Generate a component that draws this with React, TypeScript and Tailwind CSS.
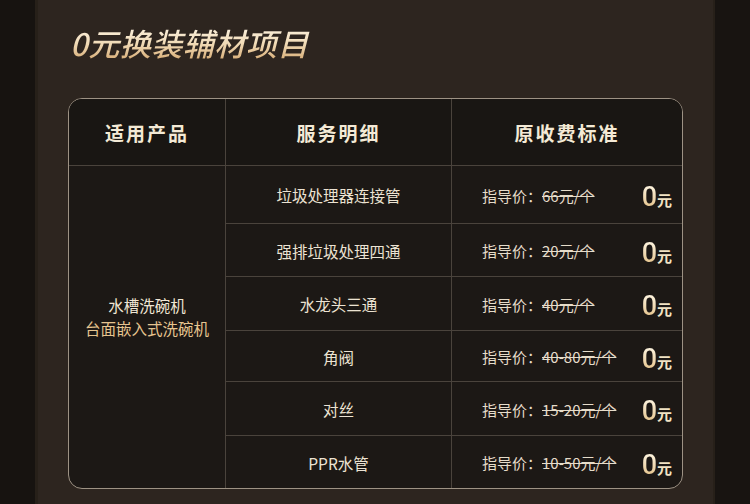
const rows = [
  { name: '垃圾处理器连接管', price: '66元/个', h: 'h-[58px]' },
  { name: '强排垃圾处理四通', price: '20元/个', h: 'h-[53px]' },
  { name: '水龙头三通', price: '40元/个', h: 'h-[54px]' },
  { name: '角阀', price: '40-80元/个', h: 'h-[51px]' },
  { name: '对丝', price: '15-20元/个', h: 'h-[54px]' },
  { name: 'PPR水管', price: '10-50元/个', h: 'h-[52px]' },
];

const cjk = "font-['Noto_Sans_CJK_SC',sans-serif]";

export default function App() {
  return (
    <div className={`flex h-[504px] w-[750px] overflow-hidden bg-[#1a1613] ${cjk}`}>
      <div className="w-[35px] shrink-0 bg-[#171310]" />
      <div className="w-[680px] shrink-0 border-l-[3px] border-r-[2px] border-[#272019] bg-[#2d251f] pl-[30px]">
        {/* Title */}
        <h1 className="mt-[23px] bg-gradient-to-b from-[#fdf6e8] via-[#f1dcb8] to-[#d3a66c] bg-clip-text pl-[2px] text-[31px] font-medium italic leading-[40px] tracking-[0.5px] text-transparent">
          0元换装辅材项目
        </h1>

        {/* Table */}
        <div className="mt-[35px] w-[615px] overflow-hidden rounded-[14px] border border-[#9d9284] bg-[#1c1815]">
          <div className="flex h-[67px] border-b border-[#4a433c] bg-[#191613] text-[19px] font-bold tracking-[2px] text-[#f4ead6]">
            <div className="flex w-[157px] items-center justify-center border-r border-[#4a433c] pt-[3px]">适用产品</div>
            <div className="flex w-[226px] items-center justify-center border-r border-[#4a433c] pt-[3px]">服务明细</div>
            <div className="flex flex-1 items-center justify-center pt-[3px]">原收费标准</div>
          </div>

          <div className="flex">
            <div className="flex w-[157px] flex-col items-center justify-center border-r border-[#4a433c] pb-[20px] text-[15.5px] leading-[23px]">
              <span className="text-[#f0e6d4]">水槽洗碗机</span>
              <span className="text-[#e6c48f]">台面嵌入式洗碗机</span>
            </div>
            <div className="flex-1">
              {rows.map((r, i) => (
                <div
                  key={r.name}
                  className={`flex ${r.h} ${i < rows.length - 1 ? 'border-b border-[#4a433c]' : ''}`}
                >
                  <div className="flex w-[226px] items-center justify-center border-r border-[#4a433c] pt-[3px] text-[15.5px] text-[#ece3d3]">
                    {r.name}
                  </div>
                  <div className="flex flex-1 items-center pl-[30px] pr-[10px] pt-[3px]">
                    <span className="text-[15px] text-[#e6dcca]">指导价：</span>
                    <span className="text-[15px] text-[#e6dcca] line-through decoration-[#e6dcca]">{r.price}</span>
                    <span className="ml-auto mt-[3px] flex items-baseline">
                      <span className="bg-gradient-to-b from-[#fff8e6] to-[#e0bb7e] bg-clip-text font-['Roboto',sans-serif] text-[27px] font-medium leading-none text-transparent">
                        0
                      </span>
                      <span className="text-[15px] font-bold leading-none text-[#f1e3c4]">元</span>
                    </span>
                  </div>
                </div>
              ))}
            </div>
          </div>
        </div>
      </div>
      <div className="flex-1 bg-[#181411]" />
    </div>
  );
}
